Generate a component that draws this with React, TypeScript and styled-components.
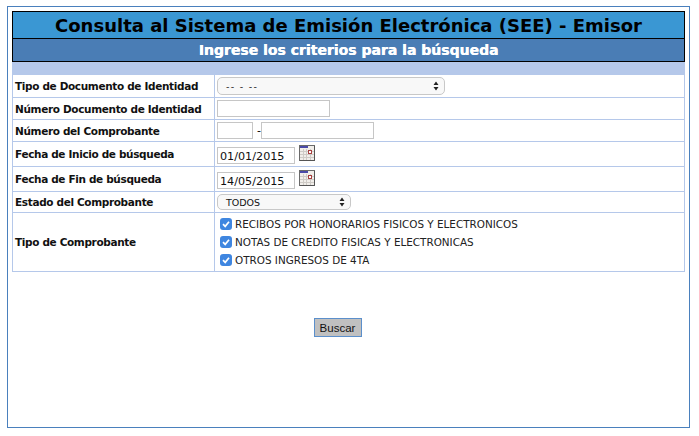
import React from "react";
import styled, { createGlobalStyle } from "styled-components";

const Global = createGlobalStyle`
  html, body { margin: 0; padding: 0; background: #fff; }
  body { font-family: "DejaVu Sans", Verdana, sans-serif; color: #000; }
`;

const Frame = styled.div`
  box-sizing: border-box;
  width: 683px;
  height: 422px;
  margin: 6px 0 0 7px;
  padding: 4px;
  border: 1px solid #4a80bd;
`;
const Title = styled.h1`
  box-sizing: border-box;
  margin: 0;
  height: 28px;
  background: #3a97d3;
  border: 1px solid #000;
  font-size: 18px;
  line-height: 27px;
  font-weight: 700;
  text-align: center;
`;
const Subtitle = styled.h2`
  box-sizing: border-box;
  margin: 0;
  height: 23px;
  background: #4a7db5;
  border: 1px solid #000;
  border-top: 0;
  color: #fff;
  font-size: 14px;
  line-height: 22px;
  font-weight: 700;
  text-align: center;
  text-shadow: 0.4px 0 0 #fff;
`;
const Band = styled.div`
  height: 13px;
  background: #b5c8ea;
`;
const Form = styled.div`
  border-left: 1px solid #b5c8ea;
  border-right: 1px solid #b5c8ea;
`;
const Row = styled.div<{ $h: number }>`
  box-sizing: border-box;
  display: grid;
  grid-template-columns: 201px 1fr;
  height: ${(p) => p.$h}px;
  border-bottom: 1px solid #b5c8ea;
`;
const Label = styled.div`
  display: flex;
  align-items: center;
  padding-left: 2px;
  font-size: 10.5px;
  font-weight: 700;
  letter-spacing: -0.35px;
  color: #111;
  white-space: nowrap;
`;
const Cell = styled.div`
  display: flex;
  align-items: center;
  padding-left: 2px;
  border-left: 1px solid #b5c8ea;
`;
const DateCell = styled(Cell)`
  align-items: flex-start;
  padding-top: 3px;
  gap: 4px;
`;
const Select = styled.div<{ $w: number; $h: number; $track?: number }>`
  box-sizing: border-box;
  width: ${(p) => p.$w}px;
  height: ${(p) => p.$h}px;
  display: flex;
  align-items: center;
  justify-content: space-between;
  padding: 0 5px 0 8px;
  background: #f8f8f8;
  border: 1px solid #c8c8c8;
  border-radius: 5px;
  font-size: 9.5px;
  letter-spacing: ${(p) => p.$track ?? 0}px;
  color: #111;
`;
const Input = styled.div<{ $w: number; $mt?: number }>`
  box-sizing: border-box;
  width: ${(p) => p.$w}px;
  height: 17px;
  margin-top: ${(p) => p.$mt ?? 0}px;
  padding-left: 2px;
  border: 1px solid #c6c6c6;
  background: #fff;
  font-size: 11.2px;
  line-height: 17px;
  color: #111;
`;
const Dash = styled.span`
  font-size: 11px;
  margin: 0 0 0 4px;
`;
const Checks = styled.div`
  display: flex;
  flex-direction: column;
  gap: 5px;
  padding-left: 3px;
`;
const CheckRow = styled.label`
  display: flex;
  align-items: center;
  gap: 3px;
  height: 13px;
  font-size: 10.4px;
  color: #222;
  white-space: nowrap;
`;
const Box = styled.span`
  display: inline-flex;
  align-items: center;
  justify-content: center;
  width: 12px;
  height: 12px;
  border-radius: 3px;
  background: #3f86e0;
`;
const Actions = styled.div`
  display: flex;
  justify-content: center;
  padding-top: 46px;
  padding-right: 22px;
`;
const Button = styled.button`
  box-sizing: border-box;
  width: 48px;
  height: 19px;
  padding: 0;
  background: #c0c0c0;
  border: 1px solid #5b8fcb;
  font-family: "Liberation Sans", Arial, sans-serif;
  font-size: 11.5px;
  color: #111;
`;

const Arrows = () => (
  <svg width="6" height="10" viewBox="0 0 6 10">
    <path d="M3 0.5 L5.5 4 H0.5 Z M3 9.5 L0.5 6 H5.5 Z" fill="#222" />
  </svg>
);
const Tick = () => (
  <svg width="10" height="10" viewBox="0 0 10 10">
    <path d="M2 5.2 L4.2 7.4 L8 2.8" fill="none" stroke="#fff" strokeWidth="1.7" />
  </svg>
);
const Calendar = () => (
  <svg width="16" height="16" viewBox="0 0 16 16">
    <rect x="0.5" y="0.5" width="15" height="15" fill="#f1eeea" stroke="#6a6a6a" />
    <rect x="1" y="1" width="8" height="2" fill="#4a4aa8" />
    <path d="M1 6.5H15M1 9.5H15M1 12.5H15M4.5 4V15M7.5 4V15M11.5 4V15" stroke="#cfcbc6" strokeWidth="1" />
    <rect x="9.5" y="5.5" width="3" height="3" fill="#fff" stroke="#a84040" />
    <path d="M1 15.5H15.5V1" fill="none" stroke="#555" />
  </svg>
);

const options = [
  "RECIBOS POR HONORARIOS FISICOS Y ELECTRONICOS",
  "NOTAS DE CREDITO FISICAS Y ELECTRONICAS",
  "OTROS INGRESOS DE 4TA",
];

export default function App() {
  return (
    <>
      <Global />
      <Frame>
        <Title>Consulta al Sistema de Emisión Electrónica (SEE) - Emisor</Title>
        <Subtitle>Ingrese los criterios para la búsqueda</Subtitle>
        <Band />
        <Form>
          <Row $h={23}>
            <Label>Tipo de Documento de Identidad</Label>
            <Cell>
              <Select $w={228} $h={18} $track={1.3}>
                -- - --
                <Arrows />
              </Select>
            </Cell>
          </Row>
          <Row $h={22}>
            <Label>Número Documento de Identidad</Label>
            <Cell>
              <Input $w={113} />
            </Cell>
          </Row>
          <Row $h={22}>
            <Label>Número del Comprobante</Label>
            <Cell>
              <Input $w={36} />
              <Dash>-</Dash>
              <Input $w={113} />
            </Cell>
          </Row>
          <Row $h={25}>
            <Label>Fecha de Inicio de búsqueda</Label>
            <DateCell>
              <Input $w={78} $mt={2}>01/01/2015</Input>
              <Calendar />
            </DateCell>
          </Row>
          <Row $h={25}>
            <Label>Fecha de Fin de búsqueda</Label>
            <DateCell>
              <Input $w={78} $mt={2}>14/05/2015</Input>
              <Calendar />
            </DateCell>
          </Row>
          <Row $h={21}>
            <Label>Estado del Comprobante</Label>
            <Cell>
              <Select $w={134} $h={16}>
                TODOS
                <Arrows />
              </Select>
            </Cell>
          </Row>
          <Row $h={59}>
            <Label>Tipo de Comprobante</Label>
            <Cell>
              <Checks>
                {options.map((o) => (
                  <CheckRow key={o}>
                    <Box>
                      <Tick />
                    </Box>
                    {o}
                  </CheckRow>
                ))}
              </Checks>
            </Cell>
          </Row>
        </Form>
        <Actions>
          <Button>Buscar</Button>
        </Actions>
      </Frame>
    </>
  );
}
